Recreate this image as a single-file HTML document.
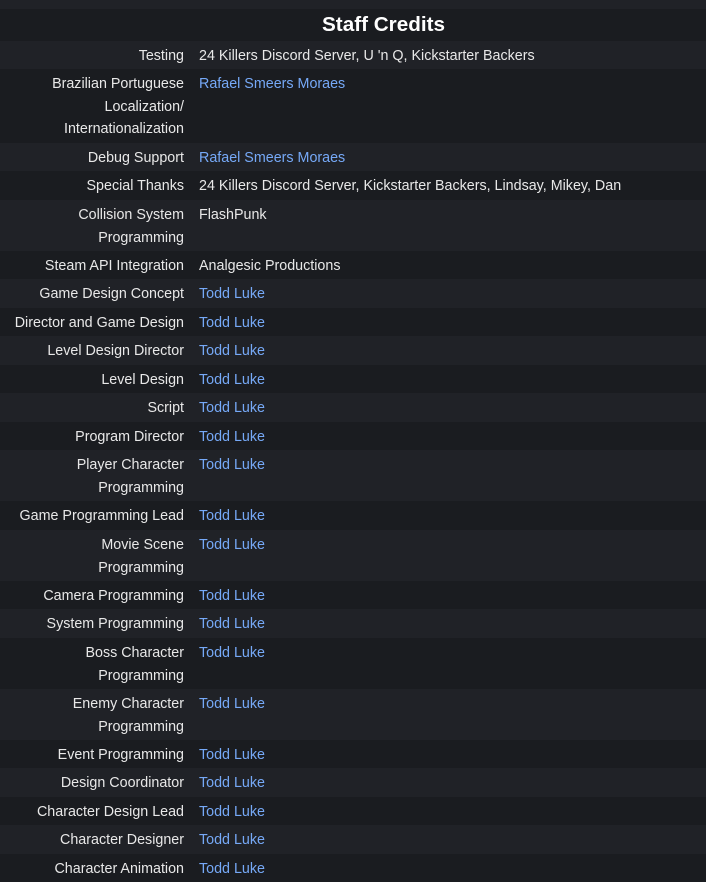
<!DOCTYPE html>
<html><head><meta charset="utf-8"><style>
html,body{margin:0;padding:0;background:#1b1d21;width:706px;height:871px;overflow:hidden;font-family:"Liberation Sans",sans-serif;}
.r{position:absolute;left:0;width:706px;font-size:14.3px;line-height:22.5px;color:#e8e8e8;}
.a{background:#202227}.b{background:#1a1c20}
.l{position:absolute;right:522px;top:4px;text-align:right;white-space:nowrap;}
.v{position:absolute;left:199px;top:4px;white-space:nowrap;}
.k{color:#76a9f7}
h1{position:absolute;left:0;top:9px;width:706px;height:32px;margin:0;background:#1a1c20;}
h1 span{position:absolute;left:322px;top:4px;font-size:20.7px;font-weight:bold;color:#fff;letter-spacing:0}
</style></head><body>
<div class="r a" style="top:0;height:9px"></div>
<h1><span>Staff Credits</span></h1>
<div class="r a" style="top:41px;height:28px"><div class="l">Testing</div><div class="v">24 Killers Discord Server, U 'n Q, Kickstarter Backers</div></div>
<div class="r b" style="top:69px;height:74px"><div class="l">Brazilian Portuguese<br>Localization/<br>Internationalization</div><div class="v k">Rafael Smeers Moraes</div></div>
<div class="r a" style="top:143px;height:28px"><div class="l">Debug Support</div><div class="v k">Rafael Smeers Moraes</div></div>
<div class="r b" style="top:171px;height:29px"><div class="l">Special Thanks</div><div class="v">24 Killers Discord Server, Kickstarter Backers, Lindsay, Mikey, Dan</div></div>
<div class="r a" style="top:200px;height:51px"><div class="l">Collision System<br>Programming</div><div class="v">FlashPunk</div></div>
<div class="r b" style="top:251px;height:28px"><div class="l">Steam API Integration</div><div class="v">Analgesic Productions</div></div>
<div class="r a" style="top:279px;height:29px"><div class="l">Game Design Concept</div><div class="v k">Todd Luke</div></div>
<div class="r b" style="top:308px;height:28px"><div class="l">Director and Game Design</div><div class="v k">Todd Luke</div></div>
<div class="r a" style="top:336px;height:29px"><div class="l">Level Design Director</div><div class="v k">Todd Luke</div></div>
<div class="r b" style="top:365px;height:28px"><div class="l">Level Design</div><div class="v k">Todd Luke</div></div>
<div class="r a" style="top:393px;height:29px"><div class="l">Script</div><div class="v k">Todd Luke</div></div>
<div class="r b" style="top:422px;height:28px"><div class="l">Program Director</div><div class="v k">Todd Luke</div></div>
<div class="r a" style="top:450px;height:51px"><div class="l">Player Character<br>Programming</div><div class="v k">Todd Luke</div></div>
<div class="r b" style="top:501px;height:29px"><div class="l">Game Programming Lead</div><div class="v k">Todd Luke</div></div>
<div class="r a" style="top:530px;height:51px"><div class="l">Movie Scene<br>Programming</div><div class="v k">Todd Luke</div></div>
<div class="r b" style="top:581px;height:28px"><div class="l">Camera Programming</div><div class="v k">Todd Luke</div></div>
<div class="r a" style="top:609px;height:29px"><div class="l">System Programming</div><div class="v k">Todd Luke</div></div>
<div class="r b" style="top:638px;height:51px"><div class="l">Boss Character<br>Programming</div><div class="v k">Todd Luke</div></div>
<div class="r a" style="top:689px;height:51px"><div class="l">Enemy Character<br>Programming</div><div class="v k">Todd Luke</div></div>
<div class="r b" style="top:740px;height:28px"><div class="l">Event Programming</div><div class="v k">Todd Luke</div></div>
<div class="r a" style="top:768px;height:29px"><div class="l">Design Coordinator</div><div class="v k">Todd Luke</div></div>
<div class="r b" style="top:797px;height:28px"><div class="l">Character Design Lead</div><div class="v k">Todd Luke</div></div>
<div class="r a" style="top:825px;height:29px"><div class="l">Character Designer</div><div class="v k">Todd Luke</div></div>
<div class="r b" style="top:854px;height:28px"><div class="l">Character Animation</div><div class="v k">Todd Luke</div></div>
</body></html>
